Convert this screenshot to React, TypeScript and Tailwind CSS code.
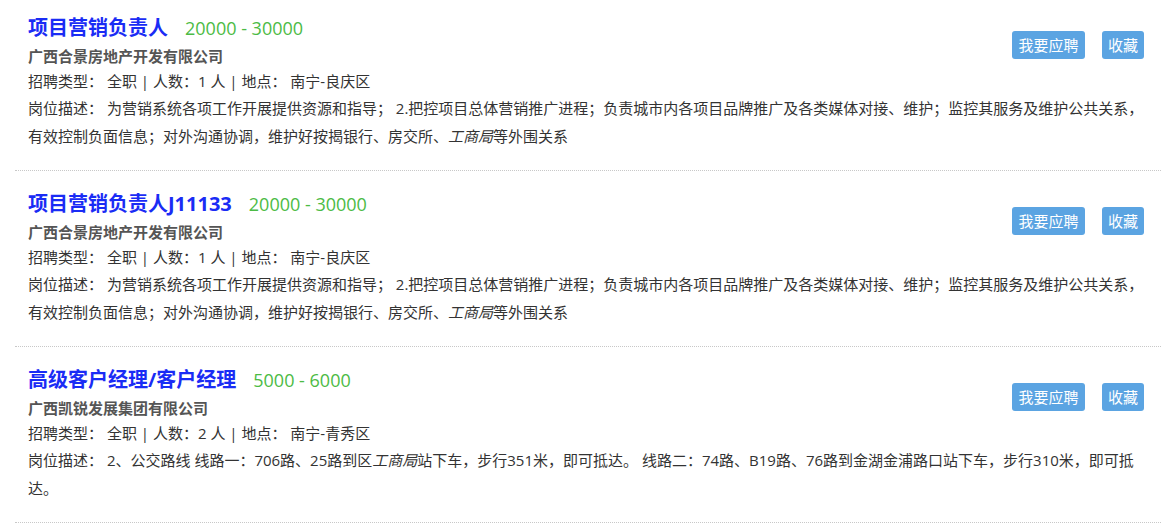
import React from 'react';

interface Job {
  id: number;
  title: string;
  salary: string;
  company: string;
  headcount: number;
  location: string;
  desc: React.ReactNode;
}

const jobs: Job[] = [
  {
    id: 1,
    title: '项目营销负责人',
    salary: '20000 - 30000',
    company: '广西合景房地产开发有限公司',
    headcount: 1,
    location: '南宁-良庆区',
    desc: (
      <>
        为营销系统各项工作开展提供资源和指导； 2.把控项目总体营销推广进程；负责城市内各项目品牌推广及各类媒体对接、维护；监控其服务及维护公共关系，有效控制负面信息；对外沟通协调，维护好按揭银行、房交所、<em>工商局</em>等外围关系
      </>
    ),
  },
  {
    id: 2,
    title: '项目营销负责人J11133',
    salary: '20000 - 30000',
    company: '广西合景房地产开发有限公司',
    headcount: 1,
    location: '南宁-良庆区',
    desc: (
      <>
        为营销系统各项工作开展提供资源和指导； 2.把控项目总体营销推广进程；负责城市内各项目品牌推广及各类媒体对接、维护；监控其服务及维护公共关系，有效控制负面信息；对外沟通协调，维护好按揭银行、房交所、<em>工商局</em>等外围关系
      </>
    ),
  },
  {
    id: 3,
    title: '高级客户经理/客户经理',
    salary: '5000 - 6000',
    company: '广西凯锐发展集团有限公司',
    headcount: 2,
    location: '南宁-青秀区',
    desc: (
      <>
        2、公交路线 线路一：706路、25路到区<em>工商局</em>站下车，步行351米，即可抵达。 线路二：74路、B19路、76路到金湖金浦路口站下车，步行310米，即可抵达。
      </>
    ),
  },
];

function JobItem({ job }: { job: Job }) {
  return (
    <li className="border-b border-dotted border-[#c8c8c8] pl-[13px] pr-[17px] pt-[18px] pb-[20px] first:pt-[13px]">
      <div className="flex items-start justify-between">
        <div>
          <div className="flex items-baseline h-[30px] leading-[30px]">
            <a href="#" className="text-[20px] font-bold text-[#1a2cf5]">
              {job.title}
            </a>
            <span className="ml-[17px] text-[18px] text-[#4cbb45]">{job.salary}</span>
          </div>
          <p className="text-[15px] font-bold leading-[26px] text-[#555]">{job.company}</p>
          <p className="text-[15px] leading-[25px] text-[#333]">
            招聘类型： 全职 | 人数：{job.headcount} 人 | 地点： {job.location}
          </p>
        </div>
        <div className="mt-[18px] flex gap-[17px]">
          <button className="h-[28px] w-[73px] rounded-[3px] bg-[#5ba4e2] text-[15px] leading-[28px] text-white">
            我要应聘
          </button>
          <button className="h-[28px] w-[42px] rounded-[3px] bg-[#5ba4e2] text-[15px] leading-[28px] text-white">
            收藏
          </button>
        </div>
      </div>
      <p className="text-[15px] leading-[28px] text-[#333]">
        岗位描述： {job.desc}
      </p>
    </li>
  );
}

export default function App() {
  return (
    <div
      className="min-h-[523px] bg-white"
      style={{ fontFamily: '"Open Sans", "Noto Sans CJK SC", sans-serif' }}
    >
      <ul className="ml-[15px] mr-[12px]">
        {jobs.map((job) => (
          <JobItem key={job.id} job={job} />
        ))}
      </ul>
    </div>
  );
}
